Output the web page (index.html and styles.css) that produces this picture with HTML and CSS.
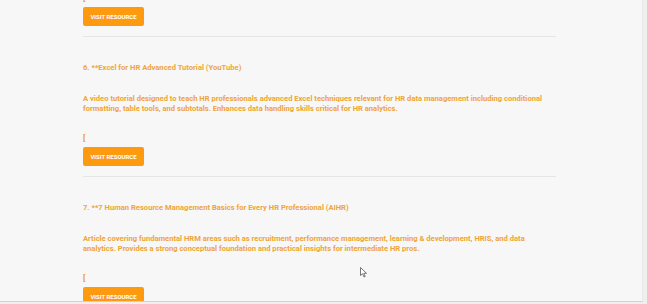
FILE: index.html
```html
<!DOCTYPE html>
<html lang="en">
<head>
  <meta charset="UTF-8">
  <meta name="viewport" content="width=device-width, initial-scale=1.0">
  <title>HR Learning Resources</title>
  <link rel="stylesheet" href="styles.css">
</head>
<body>
  <div class="viewport">
    <div class="resources">

      <!-- tail of item 5, page is scrolled -->
      <div class="resource">
        <p class="bracket">[</p>
        <button class="visit">Visit Resource</button>
      </div>

      <div class="resource">
        <h3 class="resource-title">6. **Excel for HR Advanced Tutorial (YouTube)</h3>
        <p class="resource-desc">A video tutorial designed to teach HR professionals advanced Excel techniques relevant for HR data management including conditional formatting, table tools, and subtotals. Enhances data handling skills critical for HR analytics.</p>
        <p class="bracket">[</p>
        <button class="visit">Visit Resource</button>
      </div>

      <div class="resource">
        <h3 class="resource-title">7. **7 Human Resource Management Basics for Every HR Professional (AIHR)</h3>
        <p class="resource-desc">Article covering fundamental HRM areas such as recruitment, performance management, learning &amp; development, HRIS, and data analytics. Provides a strong conceptual foundation and practical insights for intermediate HR pros.</p>
        <p class="bracket">[</p>
        <button class="visit">Visit Resource</button>
      </div>

    </div>

    <svg class="cursor" width="8" height="11" viewBox="0 0 8 11">
      <path d="M0.5 0.5 L0.5 8.5 L2.5 6.7 L4 10 L5.2 9.5 L3.8 6.3 L6.5 6.3 Z" fill="#fff" stroke="#555" stroke-width="0.8" stroke-linejoin="round"/>
    </svg>
  </div>
</body>
</html>
```

FILE: styles.css
```css
body {
  margin: 0;
  background-color: #efefef;
  font-family: 'Roboto', sans-serif;
}
.viewport {
  position: relative;
  width: 642px;
  height: 301px;
  background-color: #f7f7f7;
  border-right: 1px solid #e8e8e8;
  border-bottom: 1px solid #d2d2d2;
  overflow: hidden;
}
.resources {
  width: 473px;
  margin: -6px 0 0 83px;
}
.resource {
  border-bottom: 1px solid #e6e6e6;
  padding-bottom: 10px;
}
.resource + .resource {
  padding-top: 26px;
}
.resource-title {
  margin: 0;
  font-size: 7.6px;
  line-height: 10px;
  font-weight: 700;
  color: #eda53c;
}
.resource-desc {
  margin: 21px 0 0;
  padding-right: 11px;
  font-size: 7.6px;
  line-height: 10px;
  font-weight: 700;
  color: #efa436;
}
.bracket {
  margin: 20px 0 0;
  font-size: 8px;
  line-height: 10px;
  font-weight: 700;
  color: #eea030;
}
.resource:first-child .bracket {
  margin-top: 0;
}
.visit {
  display: block;
  margin-top: 3px;
  height: 19px;
  width: 61px;
  padding: 0;
  border: none;
  border-radius: 2px;
  background-color: #fd9a10;
  color: #fff;
  font-family: 'Roboto', sans-serif;
  font-size: 6px;
  font-weight: 700;
  text-transform: uppercase;
}
.cursor {
  position: absolute;
  left: 360px;
  top: 267px;
}
```
